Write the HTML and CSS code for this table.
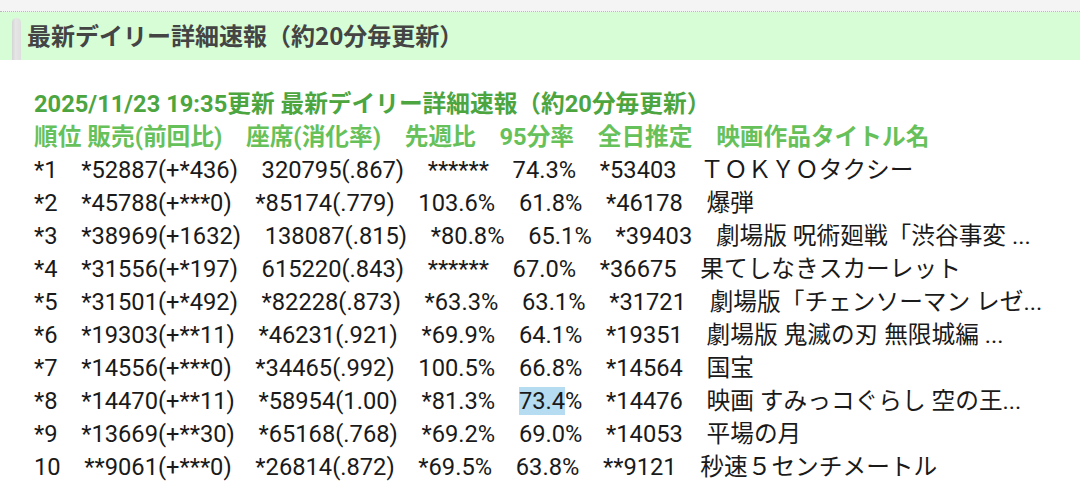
FILE: index.html
```html
<!DOCTYPE html>
<html lang="ja">
<head>
<meta charset="utf-8">
<link rel="stylesheet" href="styles.css">
</head>
<body>
<div class="topstrip"></div>
<div class="band">
  <span class="marker"></span>
  <h1 class="title">最新デイリー詳細速報（約20分毎更新）</h1>
</div>
<div class="content">
<p class="update">2025/11/23 19:35更新 最新デイリー詳細速報（約20分毎更新）</p>
<p class="head">順位 販売(前回比)　座席(消化率)　先週比　95分率　全日推定　映画作品タイトル名</p>
<p class="row">*1　*52887(+*436)　320795(.867)　******　74.3%　*53403　ＴＯＫＹＯタクシー</p>
<p class="row">*2　*45788(+***0)　*85174(.779)　103.6%　61.8%　*46178　爆弾</p>
<p class="row">*3　*38969(+1632)　138087(.815)　*80.8%　65.1%　*39403　劇場版 呪術廻戦「渋谷事変 ...</p>
<p class="row">*4　*31556(+*197)　615220(.843)　******　67.0%　*36675　果てしなきスカーレット</p>
<p class="row">*5　*31501(+*492)　*82228(.873)　*63.3%　63.1%　*31721　劇場版「チェンソーマン レゼ...</p>
<p class="row">*6　*19303(+**11)　*46231(.921)　*69.9%　64.1%　*19351　劇場版 鬼滅の刃 無限城編 ...</p>
<p class="row">*7　*14556(+***0)　*34465(.992)　100.5%　66.8%　*14564　国宝</p>
<p class="row">*8　*14470(+**11)　*58954(1.00)　*81.3%　<span class="hl">73.4</span>%　*14476　映画 すみっコぐらし 空の王...</p>
<p class="row">*9　*13669(+**30)　*65168(.768)　*69.2%　69.0%　*14053　平場の月</p>
<p class="row">10　**9061(+***0)　*26814(.872)　*69.5%　63.8%　**9121　秒速５センチメートル</p>
</div>
</body>
</html>
```
FILE: styles.css
```css
html, body {
  margin: 0;
  padding: 0;
  background: #ffffff;
}
body {
  font-family: Roboto, "Noto Sans CJK JP", sans-serif;
  color: #1a1a1a;
  overflow: hidden;
}
.topstrip {
  height: 11px;
  background: #f4f4f4;
  border-bottom: 1px dotted #b8b8b8;
}
.band {
  display: flex;
  align-items: stretch;
  height: 48px;
  background: #d6fdd6;
  padding-left: 12px;
}
.marker {
  width: 9px;
  margin-top: 6px;
  border-radius: 5px 5px 0 0;
  background: linear-gradient(to right, #d4d4d4, #e6e6e6 40%, #dedede);
}
.title {
  margin: 0 0 0 6px;
  align-self: center;
  padding-bottom: 3px;
  font-family: "Noto Sans CJK JP", sans-serif;
  font-size: 24px;
  font-weight: bold;
  color: #444444;
  line-height: 30px;
}
.content {
  padding: 28px 0 0 34px;
}
.content p {
  margin: 0;
  white-space: pre;
  font-size: 23.7px;
  line-height: 33px;
}
.update {
  font-weight: bold;
  color: #4ca53f;
}
.head {
  font-weight: bold;
  color: #67c15a;
}
.row {
  color: #1a1a1a;
}
.hl {
  background: #b5dcf0;
}
```
